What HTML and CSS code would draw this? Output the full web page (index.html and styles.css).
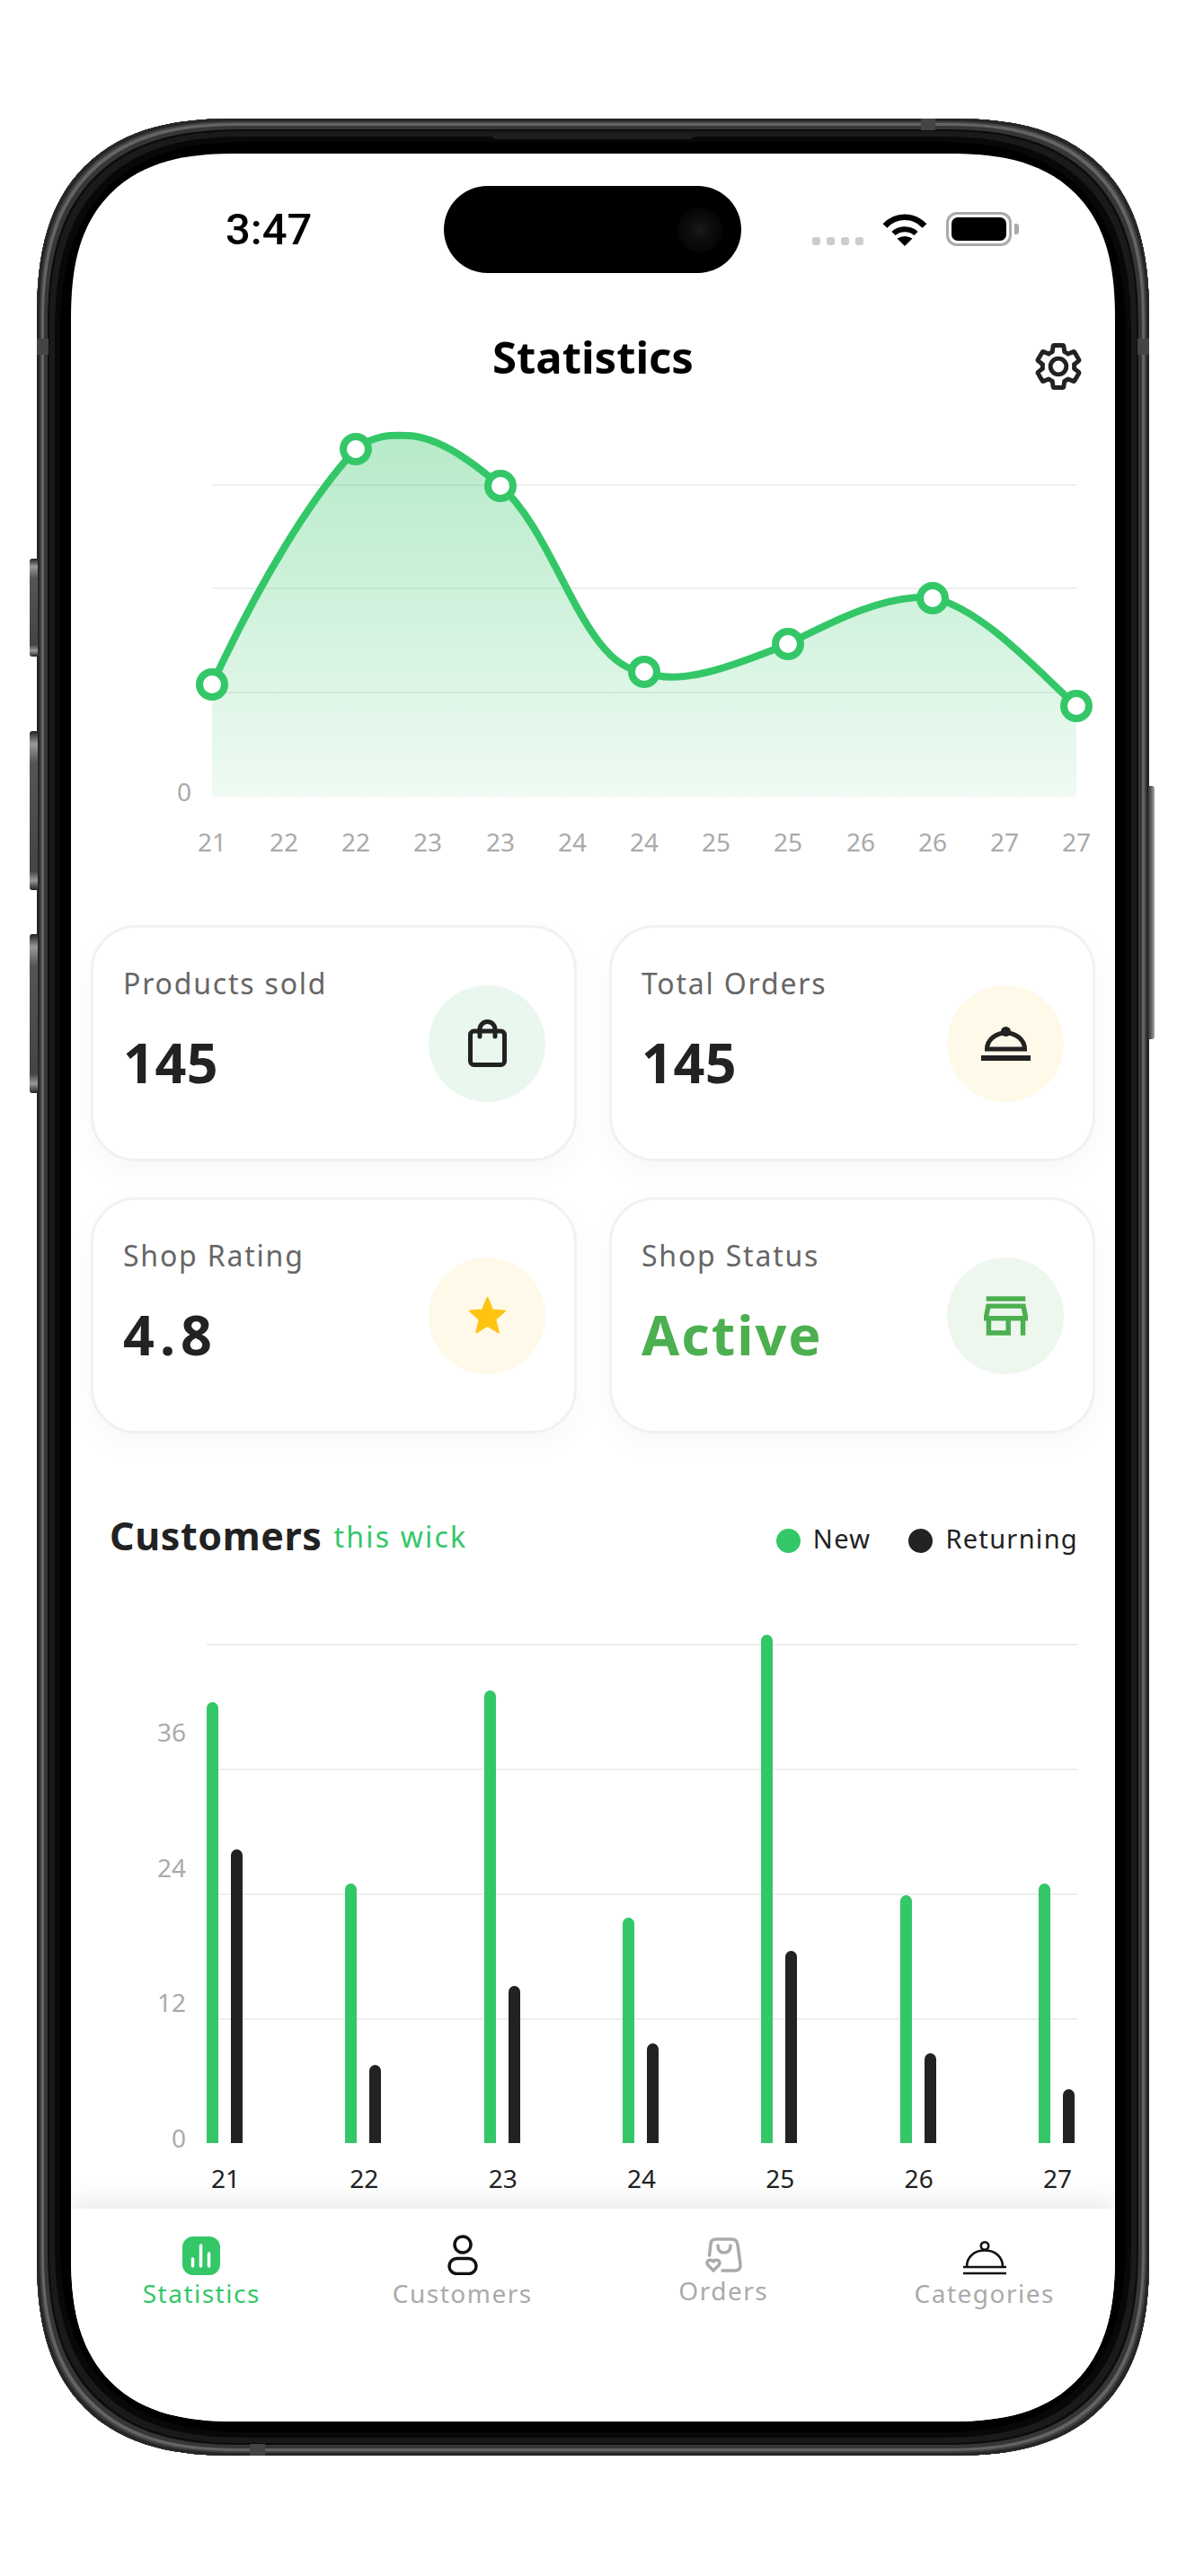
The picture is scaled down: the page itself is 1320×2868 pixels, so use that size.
FILE: index.html
```html
<!DOCTYPE html>
<html lang="en">
<head>
<meta charset="utf-8">
<title>Statistics</title>
<link rel="stylesheet" href="styles.css">
</head>
<body>
<div class="phone">
  <span class="btn btn-mute"></span>
  <span class="btn btn-up"></span>
  <span class="btn btn-down"></span>
  <span class="btn btn-power"></span>
  <span class="notch-top"></span>
  <span class="band band-top"></span>
  <span class="band band-left"></span>
  <span class="band band-right"></span>
  <span class="band band-bottom"></span>
  <main class="screen">
    <div class="island"><span class="lens"></span></div>
    <div class="status">
      <span class="time">3:47</span>
      <div class="status-right">
        <div class="signal"><i></i><i></i><i></i><i></i></div>
        <svg class="wifi" width="50" height="37" viewBox="0 0 50 37"><path d="M3 14.5C15 1.500 35 1.500 47 14.500" fill="none" stroke="#000" stroke-width="6.500"/><path d="M12.500 23C19 16.500 31 16.500 37.500 23" fill="none" stroke="#000" stroke-width="6"/><path d="M25 37L16.500 28.500Q25 23.500 33.500 28.500Z"/></svg>
        <div class="battery"><span class="battery-level"></span></div>
        <span class="battery-nub"></span>
      </div>
    </div>
    <header class="header">
      <h1 class="title">Statistics</h1>
      <svg class="gear" width="52" height="52" viewBox="1.400 1.400 21.200 21.200"><path fill="none" stroke="#222" stroke-width="2" stroke-linejoin="round" d="M19.140,12.940c0.040-0.300,0.060-0.610,0.060-0.940c0-0.320-0.020-0.640-0.070-0.940l2.030-1.580c0.180-0.140,0.230-0.410,0.120-0.610l-1.920-3.320c-0.120-0.220-0.370-0.290-0.590-0.220l-2.390,0.960c-0.500-0.380-1.030-0.700-1.620-0.940L14.400,2.810c-0.040-0.240-0.240-0.410-0.480-0.410h-3.840c-0.240,0-0.430,0.170-0.470,0.410L9.250,5.350C8.660,5.590,8.120,5.920,7.630,6.290L5.240,5.330c-0.220-0.080-0.470,0-0.590,0.220L2.740,8.870C2.620,9.080,2.660,9.340,2.860,9.480l2.030,1.580C4.840,11.360,4.800,11.690,4.800,12s0.020,0.640,0.070,0.940l-2.030,1.580c-0.180,0.140-0.230,0.410-0.120,0.610l1.920,3.320c0.120,0.220,0.370,0.290,0.590,0.220l2.390-0.960c0.500,0.380,1.030,0.700,1.620,0.940l0.360,2.540c0.050,0.240,0.240,0.410,0.480,0.410h3.840c0.240,0,0.440-0.170,0.470-0.410l0.360-2.540c0.590-0.240,1.130-0.560,1.620-0.940l2.390,0.960c0.220,0.080,0.470,0,0.590-0.220l1.920-3.320c0.120-0.220,0.070-0.470-0.120-0.610L19.140,12.940z M12,15.600c-1.980,0-3.600-1.620-3.600-3.600s1.620-3.600,3.600-3.600s3.600,1.620,3.600,3.600S13.980,15.600,12,15.600z"/></svg>
    </header>

    <svg class="area-chart" width="1162" height="560" viewBox="79 435 1162 560">
      <defs>
        <linearGradient id="areaFill" x1="0" y1="486" x2="0" y2="887" gradientUnits="userSpaceOnUse">
          <stop offset="0" stop-color="#34c768" stop-opacity=".36"/>
          <stop offset="1" stop-color="#34c768" stop-opacity=".08"/>
        </linearGradient>
      </defs>
      <g class="grid"><line x1="236" x2="1198" y1="540" y2="540"/><line x1="236" x2="1198" y1="655" y2="655"/><line x1="236" x2="1198" y1="771" y2="771"/></g>
      <path fill="url(#areaFill)" d="M236 762C288 650 345 555 396 500C416 484 436 484 455 485C490 487 528 516 557 541C620 596 650 745 717 748C755 765 815 742 877 717C930 690 985 662 1038 665C1095 680 1150 742 1198 786V887H236Z"/>
      <path class="curve" d="M236 762C288 650 345 555 396 500C416 484 436 484 455 485C490 487 528 516 557 541C620 596 650 745 717 748C755 765 815 742 877 717C930 690 985 662 1038 665C1095 680 1150 742 1198 786"/>
      <g class="pts"><circle cx="236" cy="762" r="14"/><circle cx="396" cy="500" r="14"/><circle cx="557" cy="541" r="14"/><circle cx="717" cy="748" r="14"/><circle cx="877" cy="717" r="14"/><circle cx="1038" cy="666" r="14"/><circle cx="1198" cy="786" r="14"/></g>
      <g class="axis"><text x="205" y="892">0</text><text x="236" y="948">21</text><text x="316" y="948">22</text><text x="396" y="948">22</text><text x="476" y="948">23</text><text x="557" y="948">23</text><text x="637" y="948">24</text><text x="717" y="948">24</text><text x="797" y="948">25</text><text x="877" y="948">25</text><text x="958" y="948">26</text><text x="1038" y="948">26</text><text x="1118" y="948">27</text><text x="1198" y="948">27</text></g>
    </svg>

    <section class="cards">
      <article class="card">
        <div class="card-body"><p class="card-label">Products sold</p><p class="card-value">145</p></div>
        <div class="badge badge-green"><svg width="43" height="53" viewBox="0 0 43 53"><rect x="2.500" y="13" width="38" height="37.500" rx="4" fill="none" stroke="#222" stroke-width="5"/><path d="M13 19V11a8.500 8.500 0 0 1 17 0V19" fill="none" stroke="#222" stroke-width="5" stroke-linecap="round"/></svg></div>
      </article>
      <article class="card">
        <div class="card-body"><p class="card-label">Total Orders</p><p class="card-value">145</p></div>
        <div class="badge badge-yellow"><svg width="55" height="38" viewBox="0 0 55 38"><rect x="0" y="32" width="55" height="6" fill="#222"/><path d="M6.500 25A21 18 0 0 1 48.500 25Z" fill="none" stroke="#222" stroke-width="5"/><circle cx="27.500" cy="5.500" r="5.500" fill="#222"/></svg></div>
      </article>
      <article class="card">
        <div class="card-body"><p class="card-label">Shop Rating</p><p class="card-value card-value-wide">4.8</p></div>
        <div class="badge badge-yellow"><svg width="43" height="43" viewBox="0 0 43 43"><path d="M21.500 2L27 15.500L41 16.500L30.300 26L33.800 40.500L21.500 32.800L9.200 40.500L12.700 26L2 16.500L16 15.500Z" fill="#ffc312" stroke="#ffc312" stroke-width="2" stroke-linejoin="round"/></svg></div>
      </article>
      <article class="card">
        <div class="card-body"><p class="card-label">Shop Status</p><p class="card-value card-value-active">Active</p></div>
        <div class="badge badge-pale"><svg width="49" height="44" viewBox="3 4 18 16"><path fill="#4caf50" d="M20 4H4v2h16V4zm1 10v-2l-1-5H4l-1 5v2h1v6h10v-6h4v6h2v-6h1zm-9 4H6v-4h6v4zm-6.960-6l.6-3h12.720l.6 3H5.040z"/></svg></div>
      </article>
    </section>

    <section class="customers-head">
      <div class="customers-title"><h2>Customers</h2><span>this wick</span></div>
      <div class="legend">
        <span class="legend-item"><i class="dot dot-green"></i>New</span>
        <span class="legend-item"><i class="dot dot-dark"></i>Returning</span>
      </div>
    </section>

    <section class="bar-chart">
      <div class="y-axis"><span>36</span><span>24</span><span>12</span><span>0</span></div>
      <div class="plot">
        <div class="plot-grid"><i></i><i></i><i></i><i></i></div>
        <div class="groups">
          <div class="group"><b class="bar bar-green" style="height:491px"></b><b class="bar bar-dark" style="height:327px"></b></div>
          <div class="group"><b class="bar bar-green" style="height:289px"></b><b class="bar bar-dark" style="height:87px"></b></div>
          <div class="group"><b class="bar bar-green" style="height:504px"></b><b class="bar bar-dark" style="height:175px"></b></div>
          <div class="group"><b class="bar bar-green" style="height:251px"></b><b class="bar bar-dark" style="height:111px"></b></div>
          <div class="group"><b class="bar bar-green" style="height:566px"></b><b class="bar bar-dark" style="height:214px"></b></div>
          <div class="group"><b class="bar bar-green" style="height:276px"></b><b class="bar bar-dark" style="height:100px"></b></div>
          <div class="group"><b class="bar bar-green" style="height:289px"></b><b class="bar bar-dark" style="height:60px"></b></div>
        </div>
      </div>
      <div class="x-labels"><span>21</span><span>22</span><span>23</span><span>24</span><span>25</span><span>26</span><span>27</span></div>
    </section>

    <nav class="tabs">
      <div class="tab tab-active">
        <div class="tab-icon"><svg width="42" height="43" viewBox="0 0 42 43"><rect width="42" height="43" rx="12" fill="#34c768"/><path d="M11.500 25V33M20.500 10V33M29.500 19V33" stroke="#fff" stroke-width="3.500" stroke-linecap="round"/></svg></div>
        <span class="tab-label">Statistics</span>
      </div>
      <div class="tab">
        <div class="tab-icon"><svg width="34" height="45" viewBox="0 0 34 45"><circle cx="17" cy="11" r="9" fill="none" stroke="#111" stroke-width="3.500"/><rect x="2" y="26.500" width="30" height="17" rx="8.500" fill="none" stroke="#111" stroke-width="3.500"/></svg></div>
        <span class="tab-label">Customers</span>
      </div>
      <div class="tab tab-orders">
        <div class="tab-icon"><svg width="41" height="39" viewBox="0 0 41 39" fill="none" stroke="#aaa" stroke-width="3.500" stroke-linecap="round" stroke-linejoin="round"><path d="M4.500 20L6 7Q6.500 2 12 2H29Q35 2 36 8L39 30Q39.500 37 33 37H19"/><path d="M14 9Q14 17 21 17Q28 17 28 9"/><path d="M9 37L3 31Q.500 27.500 4 25.500Q7 24.500 9 27Q11 24.500 14 25.500Q17.500 27.500 15 31Z"/></svg></div>
        <span class="tab-label">Orders</span>
      </div>
      <div class="tab">
        <div class="tab-icon"><svg width="48" height="38" viewBox="0 0 48 38" fill="none" stroke="#111" stroke-width="2.600"><circle cx="24" cy="5.500" r="4.200"/><path d="M4 29C4 17 13 10.500 24 10.500C35 10.500 44 17 44 29"/><path d="M0 29H48M0 36H48"/></svg></div>
        <span class="tab-label">Categories</span>
      </div>
    </nav>
  </main>
</div>
</body>
</html>
```

FILE: styles.css
```css
* { box-sizing: border-box; }
html, body { margin: 0; padding: 0; background: #fff; }
body {
  width: 1320px;
  height: 2868px;
  overflow: hidden;
  padding: 132px 41px 0;
  font-family: "Noto Sans", sans-serif;
}
p, h1, h2 { margin: 0; }

/* device */
.phone {
  position: relative;
  width: 1238px;
  height: 2602px;
  padding: 39px 38px 38px;
  border-radius: 224px;
  corner-shape: superellipse(1.35);
  background: #000;
  box-shadow:
    inset 0 0 0 3px #262626,
    inset 0 0 0 5px #404040,
    inset 0 0 0 8px #646464,
    inset 0 0 0 12px #363636,
    inset 0 0 0 14px #0c0c0c,
    inset 0 0 0 20px #1a1a1a,
    inset 0 0 0 26px #080808;
}
.btn {
  position: absolute;
  width: 9px;
  border-radius: 3px 0 0 3px;
  background: linear-gradient(180deg, #222 0, #999 8%, #555 20%, #444 88%, #999 94%, #222 100%);
}
.btn-mute { left: -8px; top: 490px; height: 109px; }
.btn-up { left: -8px; top: 682px; height: 177px; }
.btn-down { left: -8px; top: 908px; height: 177px; }
.btn-power { right: -6px; top: 743px; height: 282px; width: 7px; border-radius: 0 3px 3px 0; background: linear-gradient(270deg, #aaa 0, #666 50%, #333 100%); }
.notch-top { position: absolute; left: 506px; top: 16px; width: 226px; height: 7px; background: #1e1e1e; border-radius: 0 0 6px 6px; }
.band { position: absolute; background: #444; }
.band-top { left: 984px; top: 0; width: 16px; height: 13px; }
.band-left { left: 0; top: 245px; width: 13px; height: 18px; }
.band-right { right: 0; top: 245px; width: 13px; height: 18px; }
.band-bottom { left: 237px; bottom: 0; width: 17px; height: 13px; }

.screen {
  position: relative;
  display: flex;
  flex-direction: column;
  width: 1162px;
  height: 2525px;
  border-radius: 186px;
  corner-shape: superellipse(1.35);
  background: #fff;
  overflow: hidden;
}
.island {
  position: absolute;
  left: 415px;
  top: 36px;
  width: 331px;
  height: 97px;
  border-radius: 49px;
  background: #000;
}
.lens {
  position: absolute;
  left: 260px;
  top: 24px;
  width: 50px;
  height: 50px;
  border-radius: 50%;
  background: radial-gradient(circle, #1c1c1c 0, #0e0e0e 28%, #080808 60%, #000 100%);
}

/* status bar */
.status {
  display: flex;
  justify-content: space-between;
  flex: none;
  height: 190px;
  padding: 60px 107px 0 172px;
}
.time {
  font: 500 49px/50px Roboto, sans-serif;
  color: #000;
}
.status-right { display: flex; align-items: flex-end; height: 43px; gap: 21px; }
.signal { display: flex; gap: 7px; margin-bottom: 1px; }
.signal i { width: 9px; height: 9px; border-radius: 3px; background: #ccc; }
.wifi { display: block; }
.battery {
  width: 73px;
  height: 38px;
  padding: 3px;
  border: 3px solid #aaa;
  border-radius: 12px;
  background: #fff;
}
.battery-level { display: block; height: 100%; border-radius: 7px; background: #000; }
.battery-nub { width: 5px; height: 12px; margin: 0 0 13px -18px; background: #aaa; border-radius: 0 3px 3px 0; }

/* header */
.header {
  display: grid;
  grid-template-columns: 1fr auto 1fr;
  flex: none;
  height: 74px;
  padding-right: 37px;
}
.title {
  grid-column: 2;
  padding-top: 5px;
  font-size: 49px;
  line-height: 62px;
  font-weight: 700;
  color: #000;
  margin-left: 37px;
}
.gear { grid-column: 3; justify-self: end; margin-top: 21px; }

/* area chart */
.area-chart { display: block; flex: none; }
.grid line { stroke: #eeeeee; stroke-width: 2; }
.curve { fill: none; stroke: #34c768; stroke-width: 8; }
.pts circle { fill: #fff; stroke: #34c768; stroke-width: 8; }
.axis text { font-size: 28px; fill: #aaa; text-anchor: middle; }

/* cards */
.cards {
  display: grid;
  grid-template-columns: 541px 541px;
  grid-auto-rows: 263px;
  gap: 40px 36px;
  flex: none;
  margin-top: 35px;
  padding: 0 22px;
}
.card {
  display: flex;
  align-items: center;
  justify-content: space-between;
  padding: 0 32px 0 33px;
  border: 3px solid #f1f1f1;
  border-radius: 50px;
  background: #fff;
  box-shadow: 0 12px 32px rgba(0, 0, 0, .03);
}
.card-body { align-self: flex-start; padding-top: 40px; }
.card-label { font-size: 32px; line-height: 44px; letter-spacing: 1.8px; color: #666; }
.card-value { margin-top: 30px; font-size: 61px; line-height: 72px; font-weight: 700; letter-spacing: .5px; color: #222; }
.card-value-wide { letter-spacing: 6px; }
.card-value-active { color: #4caf50; letter-spacing: 2px; }
.badge { display: flex; align-items: center; justify-content: center; width: 130px; height: 130px; border-radius: 50%; }
.badge-green { background: #e9f7ef; }
.badge-yellow { background: #fff9e9; }
.badge-pale { background: #edf7ee; }

/* customers */
.customers-head {
  display: flex;
  justify-content: space-between;
  align-items: center;
  flex: none;
  margin-top: 91px;
  padding: 0 41px 0 43px;
  height: 50px;
}
.customers-title { display: flex; align-items: baseline; gap: 13px; transform: translateY(-2px); }
.customers-title h2 { font-size: 43px; line-height: 50px; font-weight: 700; color: #222; letter-spacing: .6px; }
.customers-title span { position: relative; top: -3px; font-size: 32px; color: #34c768; letter-spacing: 2.200px; }
.legend { display: flex; gap: 42px; padding-top: 2px; }
.legend-item { display: flex; align-items: center; gap: 14px; font-size: 29px; line-height: 40px; letter-spacing: 1.300px; color: #222; }
.dot { width: 27px; height: 27px; border-radius: 50%; margin-top: 4px; }
.dot-green { background: #34c768; }
.dot-dark { background: #222; }

/* bars */
.bar-chart {
  position: relative;
  flex: none;
  margin-top: 93px;
  padding-left: 151px;
  width: 1120px;
}
.y-axis {
  position: absolute;
  left: 88px;
  top: 83px;
  height: 482px;
  width: 40px;
  display: flex;
  flex-direction: column;
  justify-content: space-between;
  align-items: flex-end;
  font-size: 28px;
  line-height: 30px;
  color: #aaa;
}
.plot { position: relative; width: 969px; height: 556px; }
.plot-grid { position: absolute; inset: 0; display: flex; flex-direction: column; justify-content: flex-start; gap: 137px; }
.plot-grid i { display: block; height: 2px; background: #eeeeee; }
.groups {
  position: relative;
  display: flex;
  justify-content: space-between;
  align-items: flex-end;
  height: 100%;
  padding-right: 3px;
}
.group { display: flex; align-items: flex-end; gap: 14px; }
.bar { display: block; width: 13px; border-radius: 7px 7px 0 0; }
.bar-green { background: #34c768; }
.bar-dark { background: #222; }
.x-labels {
  display: flex;
  justify-content: space-between;
  width: 968px;
  margin-top: 20px;
  font-size: 28px;
  line-height: 38px;
  color: #222;
}
.x-labels span { width: 42px; text-align: center; }

/* tabs */
.tabs {
  position: relative;
  display: grid;
  grid-template-columns: repeat(4, 1fr);
  margin-top: auto;
  height: 237px;
  padding-top: 28px;
  background: #fff;
  box-shadow: 0 -8px 28px rgba(0, 0, 0, .09);
}
.tab { display: flex; flex-direction: column; align-items: center; }
.tab-icon { display: flex; align-items: flex-end; height: 46px; }
.tab-label { margin-top: 1px; font-size: 28px; line-height: 38px; letter-spacing: 1.500px; color: #aaa; }
.tab-active .tab-label { color: #34c768; }
.tab-orders .tab-label { margin-top: -2px; }
.tab-orders .tab-icon { padding-bottom: 3px; }
```
